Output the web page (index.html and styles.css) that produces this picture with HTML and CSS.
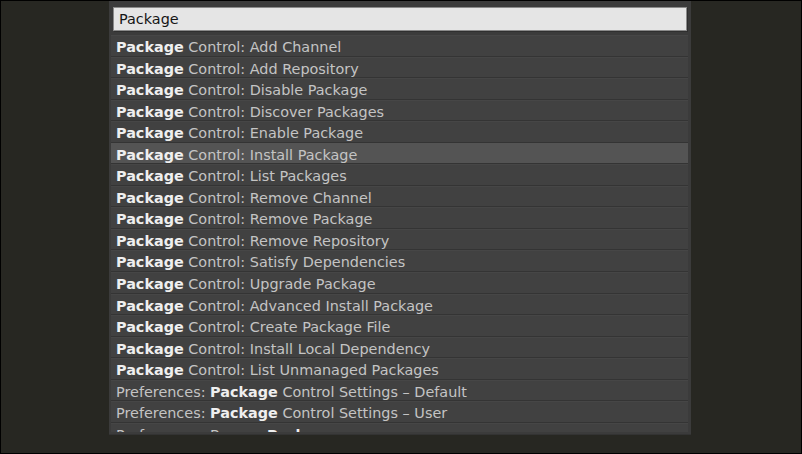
FILE: index.html
```html
<!DOCTYPE html>
<html>
<head>
<meta charset="utf-8">
<link rel="stylesheet" href="styles.css">
</head>
<body>
<div class="frame">
  <div class="panel">
    <div class="input">Package</div>
    <div class="list">
      <div class="row"><b>Package</b> Control: Add Channel</div>
      <div class="row"><b>Package</b> Control: Add Repository</div>
      <div class="row"><b>Package</b> Control: Disable Package</div>
      <div class="row"><b>Package</b> Control: Discover Packages</div>
      <div class="row"><b>Package</b> Control: Enable Package</div>
      <div class="row selected"><b>Package</b> Control: Install Package</div>
      <div class="row"><b>Package</b> Control: List Packages</div>
      <div class="row"><b>Package</b> Control: Remove Channel</div>
      <div class="row"><b>Package</b> Control: Remove Package</div>
      <div class="row"><b>Package</b> Control: Remove Repository</div>
      <div class="row"><b>Package</b> Control: Satisfy Dependencies</div>
      <div class="row"><b>Package</b> Control: Upgrade Package</div>
      <div class="row"><b>Package</b> Control: Advanced Install Package</div>
      <div class="row"><b>Package</b> Control: Create Package File</div>
      <div class="row"><b>Package</b> Control: Install Local Dependency</div>
      <div class="row"><b>Package</b> Control: List Unmanaged Packages</div>
      <div class="row">Preferences: <b>Package</b> Control Settings – Default</div>
      <div class="row">Preferences: <b>Package</b> Control Settings – User</div>
      <div class="row">Preferences: Browse <b>Package</b>s</div>
    </div>
  </div>
</div>
</body>
</html>
```
FILE: styles.css
```css
html, body {
  margin: 0;
  padding: 0;
  background: #000;
}
.frame {
  box-sizing: border-box;
  width: 802px;
  height: 454px;
  border: 1px solid #000;
  background: #272722;
  overflow: hidden;
}
.panel {
  box-sizing: border-box;
  margin-left: 108px;
  width: 582px;
  height: 434px;
  background: #3b3b3b;
  padding: 6px 0 2px 0;
  display: flex;
  flex-direction: column;
  border-bottom: 1px solid #333;
}
.input {
  box-sizing: border-box;
  margin: 0 4px 0 4px;
  height: 24px;
  background: #e5e5e5;
  border: 1px solid #8a8a8a;
  box-shadow: 1px 1px 0 #2f2f2f;
  font-family: "DejaVu Sans", sans-serif;
  font-size: 14.4px;
  line-height: 22px;
  color: #151515;
  padding-left: 5px;
  flex: none;
}
.list {
  margin: 4px 3px 0 2px;
  flex: 1;
  min-height: 0;
  overflow: hidden;
  background: #414141;
}
.row {
  box-sizing: border-box;
  height: 21.55px;
  border-bottom: 1px solid #343434;
  box-shadow: inset 0 1px 0 #464646;
  font-family: "DejaVu Sans", sans-serif;
  font-size: 14.4px;
  line-height: 21px;
  padding-top: 2px;
  overflow: hidden;
  color: #c4c4c4;
  padding-left: 5px;
  white-space: nowrap;
}
.row b {
  color: #efefef;
  font-weight: bold;
}
.row.selected {
  background: #545454;
  box-shadow: none;
}
```
